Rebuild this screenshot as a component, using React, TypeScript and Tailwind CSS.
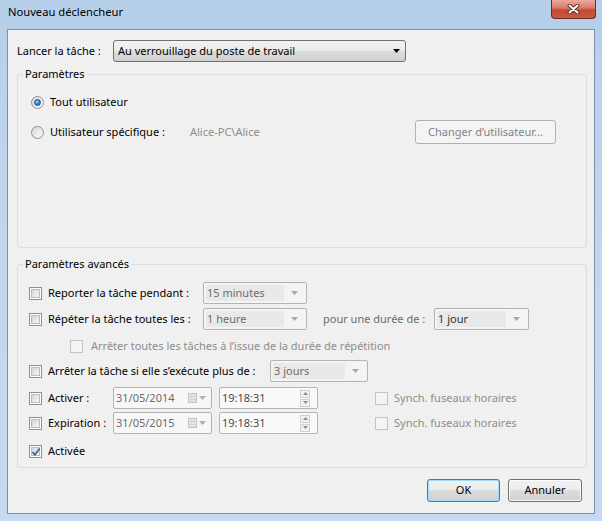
import React from "react";
import clsx from "clsx";

function Check({ checked, disabled }: { checked?: boolean; disabled?: boolean }) {
  return (
    <span
      className={clsx(
        "relative flex h-[13px] w-[13px] shrink-0 items-center justify-center border",
        disabled ? "border-[#c4c4c4] bg-[#f4f4f4]" : "border-[#8e8f8f] bg-white"
      )}
    >
      {!disabled && (
        <span className="h-[9px] w-[9px] border border-[#b8bcc1] bg-gradient-to-br from-[#d3d6da] to-[#f7f7f7]" />
      )}
      {checked && (
        <svg className="absolute left-[1px] top-[1px]" width="10" height="10" viewBox="0 0 10 10">
          <path d="M1.5 5.2 L4 7.8 L8.6 1.6" fill="none" stroke="#3c58a0" strokeWidth="1.7" />
        </svg>
      )}
    </span>
  );
}

function Radio({ checked }: { checked?: boolean }) {
  return (
    <span className="flex h-[13px] w-[13px] shrink-0 items-center justify-center rounded-full border border-[#8e8f8f] bg-gradient-to-br from-[#d6d9dc] to-[#fbfbfb]">
      {checked ? (
        <span className="h-[7px] w-[7px] rounded-full border border-[#1d4f88] bg-[radial-gradient(circle_at_40%_35%,#9fd6f7_0%,#3a8fd3_45%,#145aa0_100%)]" />
      ) : (
        <span className="h-[9px] w-[9px] rounded-full bg-gradient-to-br from-[#d9dbde] to-[#f6f6f6]" />
      )}
    </span>
  );
}

function SmallArrow({ color = "#a8a8a8" }: { color?: string }) {
  return (
    <svg width="7" height="4" viewBox="0 0 7 4">
      <path d="M0 0 H7 L3.5 4 Z" fill={color} />
    </svg>
  );
}

function Combo({ value, width, dark }: { value: string; width: string; dark?: boolean }) {
  return (
    <div
      className={clsx(
        "flex h-[22px] shrink-0 items-center rounded-[2px] border border-[#b4b4b4] bg-[#f4f4f4] pl-[2px] pr-[8px]",
        width
      )}
    >
      <span
        className={clsx(
          "flex h-[16px] flex-1 items-center bg-[#e9e9e9] pl-[1px]",
          dark ? "text-[#333333]" : "text-[#6d6d6d]"
        )}
      >
        {value}
      </span>
      <span className="ml-[7px] flex">
        <SmallArrow />
      </span>
    </div>
  );
}

function DateBox({ value }: { value: string }) {
  return (
    <div className="flex h-[22px] w-[99px] shrink-0 items-center rounded-[2px] border border-[#b4b4b4] bg-[#f7f7f7] pl-[2px] pr-[5px] text-[#6d6d6d]">
      <span className="flex-1">{value}</span>
      <svg width="9" height="10" viewBox="0 0 9 10">
        <rect x="0.5" y="0.5" width="8" height="9" fill="#ececec" stroke="#c0c0c0" />
        <path d="M0.5 3.5 H8.5 M0.5 6.5 H8.5 M3 0.5 V9.5 M6 0.5 V9.5" stroke="#d2d2d2" />
      </svg>
      <span className="ml-[2px] flex">
        <SmallArrow color="#b0b0b0" />
      </span>
    </div>
  );
}

function TimeBox({ value }: { value: string }) {
  return (
    <div className="flex h-[22px] w-[99px] shrink-0 items-center rounded-[2px] border border-[#b4b4b4] bg-[#f9f9f9] pl-[2px] pr-[7px] text-[#4a4a4a]">
      <span className="flex-1">{value}</span>
      <div className="flex flex-col gap-px">
        <span className="flex h-[8px] w-[10px] items-center justify-center border border-[#cfcfcf] bg-[#f2f2f2]">
          <svg width="5" height="3" viewBox="0 0 5 3">
            <path d="M0 3 H5 L2.5 0 Z" fill="#8a8a8a" />
          </svg>
        </span>
        <span className="flex h-[8px] w-[10px] items-center justify-center border border-[#cfcfcf] bg-[#f2f2f2]">
          <svg width="5" height="3" viewBox="0 0 5 3">
            <path d="M0 0 H5 L2.5 3 Z" fill="#8a8a8a" />
          </svg>
        </span>
      </div>
    </div>
  );
}

function Group({ title, height, children }: { title: string; height: string; children: React.ReactNode }) {
  return (
    <fieldset className={clsx("ml-[9px] mr-[7px] rounded-[3px] border border-[#d5dfe5] p-0", height)}>
      <legend className="ml-[5px] px-[2px] text-[11px] leading-[16px]">{title}</legend>
      {children}
    </fieldset>
  );
}

export default function App() {
  return (
    <div className="flex h-[521px] w-[602px] flex-col bg-gradient-to-b from-[#b6cfe9] via-[#c2d7ed] to-[#c4dbf2] px-[7px] pb-[7px] font-['Noto_Sans',sans-serif] text-[11px] text-black">
      <div className="flex h-[29px] shrink-0 items-start">
        <span className="ml-px mt-[4px] text-[11.2px] leading-[16px]">Nouveau déclencheur</span>
        <div className="-mr-px ml-auto flex h-[19px] w-[45px] items-center justify-center rounded-b-[4px] border border-t-0 border-[#6b2c22] bg-[linear-gradient(to_bottom,#e9a99b_0%,#d87a68_45%,#c24a32_55%,#c9583f_100%)]">
          <svg width="13" height="10" viewBox="0 0 13 10">
            <path d="M2.5 1.5 L10.5 8.5 M10.5 1.5 L2.5 8.5" stroke="#5a2a22" strokeWidth="3.8" strokeLinecap="round" />
            <path d="M2.5 1.5 L10.5 8.5 M10.5 1.5 L2.5 8.5" stroke="#ffffff" strokeWidth="2" strokeLinecap="round" />
          </svg>
        </div>
      </div>

      <div className="flex flex-1 flex-col border border-[#7d90a8] bg-[#f0f0f0]">
        <div className="mt-[10px] flex h-[22px] items-center">
          <span className="ml-[9px] w-[96px]">Lancer la tâche :</span>
          <div className="flex h-[22px] w-[293px] items-center rounded-[3px] border border-[#707070] bg-[linear-gradient(to_bottom,#f2f2f2_0%,#ebebeb_50%,#dddddd_50%,#cfcfcf_100%)] pl-[4px] pr-[5px]">
            <span className="flex-1">Au verrouillage du poste de travail</span>
            <SmallArrow color="#000000" />
          </div>
        </div>

        <div className="mt-[4px]">
          <Group title="Paramètres" height="h-[182px]">
            <div className="flex flex-col gap-[8px] pl-[13px] pt-[10px]">
              <div className="flex h-[20px] items-center">
                <Radio checked />
                <span className="ml-[6px]">Tout utilisateur</span>
              </div>
              <div className="flex h-[24px] items-center">
                <Radio />
                <span className="ml-[6px] w-[140px]">Utilisateur spécifique :</span>
                <span className="text-[#8d8d8d]">Alice-PC\Alice</span>
                <div className="ml-auto mr-[30px] flex h-[24px] w-[141px] items-center justify-center rounded-[3px] border border-[#adb2b5] bg-[#f4f4f4] text-[#838383]">
                  Changer d’utilisateur...
                </div>
              </div>
            </div>
          </Group>
        </div>

        <div className="mt-[8px]">
          <Group title="Paramètres avancés" height="h-[212px]">
            <div className="flex flex-col pl-[11px] pt-[10px]">
              <div className="flex h-[22px] items-center">
                <Check />
                <span className="ml-[6px] w-[155px]">Reporter la tâche pendant :</span>
                <Combo value="15 minutes" width="w-[104px]" />
              </div>
              <div className="mt-[4px] flex h-[22px] items-center">
                <Check />
                <span className="ml-[6px] w-[155px]">Répéter la tâche toutes les :</span>
                <Combo value="1 heure" width="w-[104px]" />
                <span className="ml-[16px] w-[111px] text-[#6d6d6d]">pour une durée de :</span>
                <Combo value="1 jour" width="w-[95px]" dark />
              </div>
              <div className="mt-[7px] flex h-[18px] items-center pl-[41px]">
                <Check disabled />
                <span className="ml-[8px] text-[#8d8d8d]">Arrêter toutes les tâches à l’issue de la durée de répétition</span>
              </div>
              <div className="mt-[5px] flex h-[22px] items-center">
                <Check />
                <span className="ml-[6px] w-[222px]">Arrêter la tâche si elle s’exécute plus de :</span>
                <Combo value="3 jours" width="w-[98px]" />
              </div>
              <div className="mt-[5px] flex h-[22px] items-center">
                <Check />
                <span className="ml-[6px] w-[65px]">Activer :</span>
                <DateBox value="31/05/2014" />
                <span className="ml-[7px]">
                  <TimeBox value="19:18:31" />
                </span>
                <span className="ml-[57px]">
                  <Check disabled />
                </span>
                <span className="ml-[6px] text-[#8d8d8d]">Synch. fuseaux horaires</span>
              </div>
              <div className="mt-[3px] flex h-[22px] items-center">
                <Check />
                <span className="ml-[6px] w-[65px]">Expiration :</span>
                <DateBox value="31/05/2015" />
                <span className="ml-[7px]">
                  <TimeBox value="19:18:31" />
                </span>
                <span className="ml-[57px]">
                  <Check disabled />
                </span>
                <span className="ml-[6px] text-[#8d8d8d]">Synch. fuseaux horaires</span>
              </div>
              <div className="mt-[7px] flex h-[20px] items-center">
                <Check checked />
                <span className="ml-[6px]">Activée</span>
              </div>
            </div>
          </Group>
        </div>

        <div className="mr-[12px] mt-[11px] flex justify-end gap-[8px]">
          <div className="flex h-[23px] w-[73px] items-center justify-center rounded-[3px] border border-[#3c7fb1] bg-[linear-gradient(to_bottom,#f2f2f2_0%,#ebebeb_50%,#dddddd_50%,#cfcfcf_100%)] shadow-[inset_0_0_0_1px_#a6dcf6]">
            OK
          </div>
          <div className="flex h-[23px] w-[74px] items-center justify-center rounded-[3px] border border-[#707070] bg-[linear-gradient(to_bottom,#f2f2f2_0%,#ebebeb_50%,#dddddd_50%,#cfcfcf_100%)] shadow-[inset_0_0_0_1px_#fbfbfb]">
            Annuler
          </div>
        </div>
      </div>
    </div>
  );
}
